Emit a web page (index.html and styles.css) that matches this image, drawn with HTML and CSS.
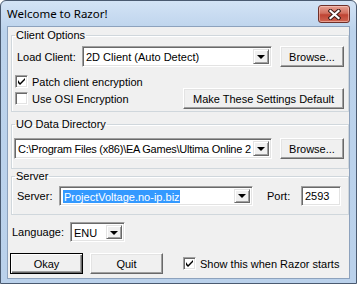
FILE: index.html
```html
<!DOCTYPE html>
<html lang="en">
<head>
    <meta charset="UTF-8">
    <title>Welcome to Razor!</title>
    <link rel="stylesheet" href="styles.css">
</head>
<body>
<div class="window">
    <div class="titlebar">
        <span class="title">Welcome to Razor!</span>
        <div class="close">
            <svg width="13" height="11" viewBox="0 0 13 11">
                <path d="M2.5 2 L10.5 9 M10.5 2 L2.5 9" stroke="#3b1a15" stroke-width="4.2" stroke-linecap="square" fill="none"/>
                <path d="M2.5 2 L10.5 9 M10.5 2 L2.5 9" stroke="#fff" stroke-width="2.2" stroke-linecap="square" fill="none"/>
            </svg>
        </div>
    </div>
    <div class="client">
        <fieldset class="group g1">
            <legend>Client Options</legend>
            <div class="row load-row">
                <span class="lbl load-lbl">Load Client:</span>
                <div class="combo load-combo"><span class="val">2D Client (Auto Detect)</span><span class="drop"></span></div>
                <button class="btn browse">Browse...</button>
            </div>
            <div class="row chk-row patch-row">
                <span class="check on"><svg width="7" height="7" viewBox="0 0 7 7"><path d="M0 2 V5 L2 7 L7 2 V0 L2 5 Z" fill="#000"/></svg></span>
                <span>Patch client encryption</span>
            </div>
            <div class="row chk-row osi-row">
                <span class="check"></span>
                <span>Use OSI Encryption</span>
                <button class="btn default-btn">Make These Settings Default</button>
            </div>
        </fieldset>

        <fieldset class="group g2">
            <legend>UO Data Directory</legend>
            <div class="row dir-row">
                <div class="combo dir-combo"><span class="val">C:\Program Files (x86)\EA Games\Ultima Online 2</span><span class="drop"></span></div>
                <button class="btn browse">Browse...</button>
            </div>
        </fieldset>

        <fieldset class="group g3">
            <legend>Server</legend>
            <div class="row server-row">
                <span class="lbl server-lbl">Server:</span>
                <div class="combo server-combo"><span class="val"><span class="sel">ProjectVoltage.no-ip.biz</span></span><span class="drop"></span></div>
                <span class="lbl port-lbl">Port:</span>
                <div class="field port">2593</div>
            </div>
        </fieldset>

        <div class="row lang-row">
            <span class="lbl lang-lbl">Language:</span>
            <div class="combo lang-combo"><span class="val">ENU</span><span class="drop"></span></div>
        </div>

        <div class="row bottom-row">
            <button class="btn okay">Okay</button>
            <button class="btn quit">Quit</button>
            <span class="check on show-chk"><svg width="7" height="7" viewBox="0 0 7 7"><path d="M0 2 V5 L2 7 L7 2 V0 L2 5 Z" fill="#000"/></svg></span>
            <span>Show this when Razor starts</span>
        </div>
    </div>
</div>
</body>
</html>
```

FILE: styles.css
```css
* { box-sizing: border-box; }
body { margin: 0; background: #ffffff; font-family: "Liberation Sans", Arial, sans-serif; font-size: 11px; color: #000000; }

.window { width: 357px; height: 284px; border: 1px solid #4a5a70; border-radius: 6px 6px 0 0; background: linear-gradient(#d3e3f5, #bcd3ec 30px, #bad1eb); padding: 0 6px 4px 6px; display: flex; flex-direction: column; }
.titlebar { height: 25px; display: flex; align-items: flex-start; }
.title { font-family: "Noto Sans", "Liberation Sans", sans-serif; font-size: 11.5px; margin-top: 5px; line-height: 16px; }
.close { margin-left: auto; margin-top: 4px; margin-right: 0; width: 32px; height: 18px; border: 1px solid #6e302a; border-radius: 3px; background: linear-gradient(#e6a092, #d2705f 45%, #bf4433 55%, #cf6552); box-shadow: inset 0 0 0 1px rgba(255, 220, 210, 0.5); display: flex; align-items: center; justify-content: center; }

.client { flex: 1; background: #f0f0f0; border: 1px solid #8da2bd; padding: 1px 1px 0 3px; display: flex; flex-direction: column; }

.group { margin: 0; padding: 0 0 2px 0; border: 1px solid #d0d7dc; box-shadow: inset 1px 1px #ffffff; width: 338px; min-width: 0; }
.group legend { padding: 0 1px; margin-left: 3px; line-height: 13px; height: 13px; }
.g1 { margin-top: 1px; }
.g2 { margin-top: 6px; padding-bottom: 9px; }
.g3 { margin-top: 1px; padding-bottom: 8px; }

.row { display: flex; align-items: center; }
.lbl { white-space: nowrap; }

.load-row { margin-top: 4px; height: 21px; }
.load-lbl { margin-left: 5px; width: 65px; }
.load-combo { width: 190px; }
.browse { width: 64px; margin-left: 8px; }

.patch-row { margin-top: 8px; height: 13px; margin-left: 3px; }
.osi-row { height: 21px; margin-left: 3px; margin-top: 0; }
.check { width: 13px; height: 13px; background: #ffffff; border: 1px solid; border-color: #a0a0a0 #ffffff #ffffff #a0a0a0; box-shadow: inset 1px 1px #696969, inset -1px -1px #e3e3e3; margin-right: 4px; display: flex; align-items: center; justify-content: center; flex: none; }
.default-btn { margin-left: auto; margin-right: 4px; width: 161px; }

.combo { height: 21px; background: #ffffff; border: 1px solid; border-color: #a0a0a0 #ffffff #ffffff #a0a0a0; box-shadow: inset 1px 1px #696969, inset -1px -1px #e3e3e3; display: flex; align-items: stretch; padding: 2px; overflow: hidden; }
.combo .val { flex: 1; min-width: 0; overflow: hidden; white-space: nowrap; line-height: 17px; padding-left: 1px; }
.drop { width: 16px; flex: none; background: #f0f0f0; border: 1px solid; border-color: #e3e3e3 #696969 #696969 #e3e3e3; box-shadow: inset 1px 1px #ffffff, inset -1px -1px #a0a0a0; display: flex; align-items: center; justify-content: center; }
.drop::after { content: ""; border-left: 4px solid transparent; border-right: 4px solid transparent; border-top: 4px solid #000000; margin-top: 1px; }

.btn { height: 21px; font-family: inherit; font-size: 11px; color: #000000; background: #f0f0f0; border: 1px solid; border-color: #ffffff #696969 #696969 #ffffff; box-shadow: inset -1px -1px #a0a0a0, inset 1px 1px #e3e3e3; padding: 0; flex: none; }

.dir-row { margin-top: 7px; height: 21px; }
.dir-combo { width: 258px; margin-left: 2px; }
.dir-combo .val { letter-spacing: -0.25px; }

.server-row { margin-top: 2px; height: 21px; }
.server-lbl { margin-left: 5px; width: 42px; }
.server-combo { width: 194px; height: 20px; }
.sel { background: #3399ff; color: #ffffff; padding: 1px 0 1px 1px; }
.port-lbl { margin-left: 14px; width: 34px; }
.field.port { width: 40px; height: 20px; background: #ffffff; border: 1px solid; border-color: #a0a0a0 #ffffff #ffffff #a0a0a0; box-shadow: inset 1px 1px #696969, inset -1px -1px #e3e3e3; padding: 0 3px; line-height: 18px; }

.lang-row { margin-top: 7px; height: 20px; }
.lang-lbl { margin-left: 1px; width: 58px; }
.lang-combo { width: 55px; height: 20px; }

.bottom-row { margin-top: 11px; height: 21px; }
.okay { width: 73px; margin-left: -1px; border: 1px solid #000000; box-shadow: inset 1px 1px #ffffff, inset -1px -1px #696969, inset -2px -2px #a0a0a0; }
.quit { width: 73px; margin-left: 7px; }
.show-chk { margin-left: 20px; }
```
